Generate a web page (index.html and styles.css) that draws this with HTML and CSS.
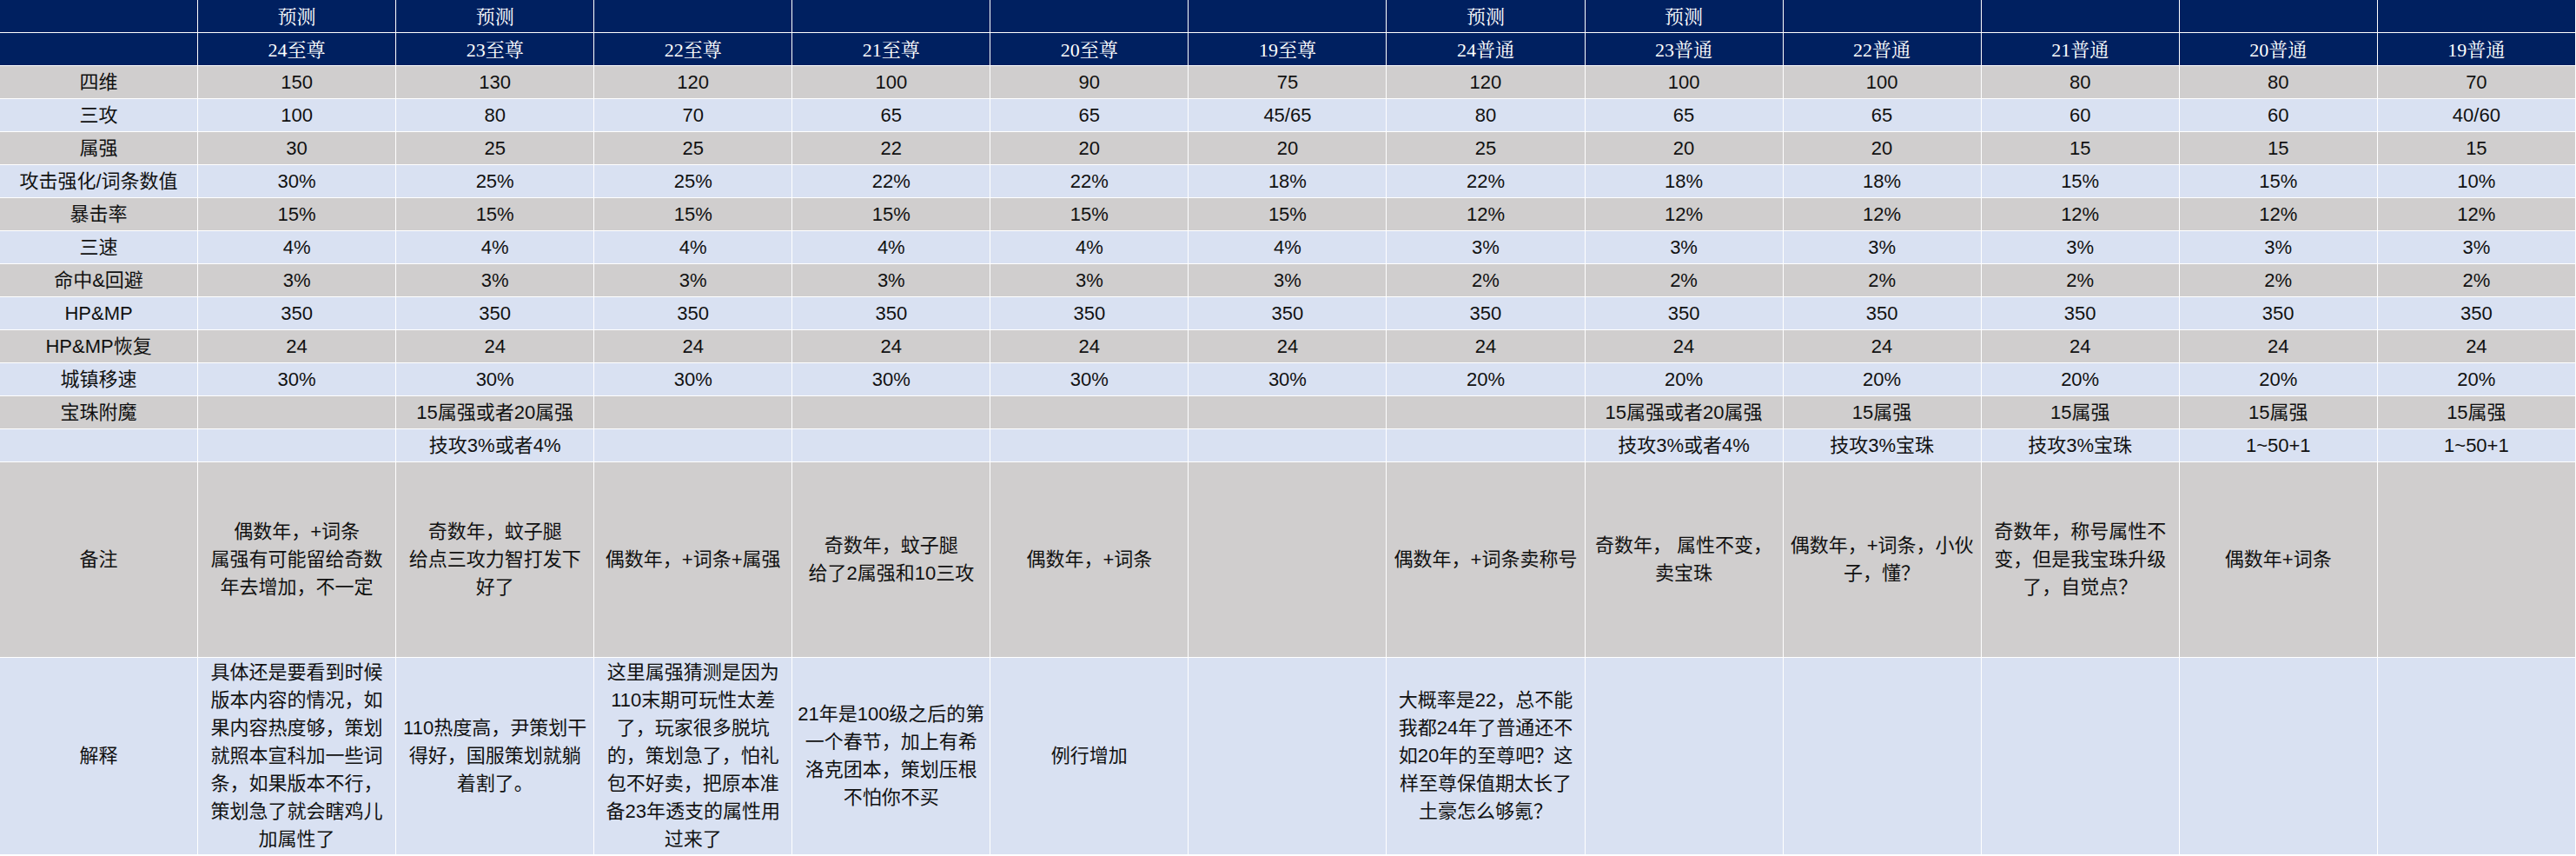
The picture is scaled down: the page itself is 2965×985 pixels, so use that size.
FILE: index.html
```html
<!DOCTYPE html>
<html lang="zh-CN">
<head>
<meta charset="utf-8">
<title>至尊/普通 属性对比</title>
<link rel="stylesheet" href="styles.css">
</head>
<body>
<table class="sheet">
  <tbody>
    <tr class="hdr">
      <td></td><td>预测</td><td>预测</td><td></td><td></td><td></td><td></td><td>预测</td><td>预测</td><td></td><td></td><td></td><td></td>
    </tr>
    <tr class="hdr">
      <td></td><td>24至尊</td><td>23至尊</td><td>22至尊</td><td>21至尊</td><td>20至尊</td><td>19至尊</td><td>24普通</td><td>23普通</td><td>22普通</td><td>21普通</td><td>20普通</td><td>19普通</td>
    </tr>
    <tr class="gray">
      <td>四维</td><td>150</td><td>130</td><td>120</td><td>100</td><td>90</td><td>75</td><td>120</td><td>100</td><td>100</td><td>80</td><td>80</td><td>70</td>
    </tr>
    <tr class="blue">
      <td>三攻</td><td>100</td><td>80</td><td>70</td><td>65</td><td>65</td><td>45/65</td><td>80</td><td>65</td><td>65</td><td>60</td><td>60</td><td>40/60</td>
    </tr>
    <tr class="gray">
      <td>属强</td><td>30</td><td>25</td><td>25</td><td>22</td><td>20</td><td>20</td><td>25</td><td>20</td><td>20</td><td>15</td><td>15</td><td>15</td>
    </tr>
    <tr class="blue">
      <td>攻击强化/词条数值</td><td>30%</td><td>25%</td><td>25%</td><td>22%</td><td>22%</td><td>18%</td><td>22%</td><td>18%</td><td>18%</td><td>15%</td><td>15%</td><td>10%</td>
    </tr>
    <tr class="gray">
      <td>暴击率</td><td>15%</td><td>15%</td><td>15%</td><td>15%</td><td>15%</td><td>15%</td><td>12%</td><td>12%</td><td>12%</td><td>12%</td><td>12%</td><td>12%</td>
    </tr>
    <tr class="blue">
      <td>三速</td><td>4%</td><td>4%</td><td>4%</td><td>4%</td><td>4%</td><td>4%</td><td>3%</td><td>3%</td><td>3%</td><td>3%</td><td>3%</td><td>3%</td>
    </tr>
    <tr class="gray">
      <td>命中&amp;回避</td><td>3%</td><td>3%</td><td>3%</td><td>3%</td><td>3%</td><td>3%</td><td>2%</td><td>2%</td><td>2%</td><td>2%</td><td>2%</td><td>2%</td>
    </tr>
    <tr class="blue">
      <td>HP&amp;MP</td><td>350</td><td>350</td><td>350</td><td>350</td><td>350</td><td>350</td><td>350</td><td>350</td><td>350</td><td>350</td><td>350</td><td>350</td>
    </tr>
    <tr class="gray">
      <td>HP&amp;MP恢复</td><td>24</td><td>24</td><td>24</td><td>24</td><td>24</td><td>24</td><td>24</td><td>24</td><td>24</td><td>24</td><td>24</td><td>24</td>
    </tr>
    <tr class="blue">
      <td>城镇移速</td><td>30%</td><td>30%</td><td>30%</td><td>30%</td><td>30%</td><td>30%</td><td>20%</td><td>20%</td><td>20%</td><td>20%</td><td>20%</td><td>20%</td>
    </tr>
    <tr class="gray">
      <td>宝珠附魔</td><td></td><td>15属强或者20属强</td><td></td><td></td><td></td><td></td><td></td><td>15属强或者20属强</td><td>15属强</td><td>15属强</td><td>15属强</td><td>15属强</td>
    </tr>
    <tr class="blue">
      <td></td><td></td><td>技攻3%或者4%</td><td></td><td></td><td></td><td></td><td></td><td>技攻3%或者4%</td><td>技攻3%宝珠</td><td>技攻3%宝珠</td><td>1~50+1</td><td>1~50+1</td>
    </tr>
    <tr class="gray tall note">
      <td>备注</td>
      <td>偶数年，+词条<br>属强有可能留给奇数年去增加，不一定</td>
      <td>奇数年，蚊子腿<br>给点三攻力智打发下好了</td>
      <td>偶数年，+词条+属强</td>
      <td>奇数年，蚊子腿<br>给了2属强和10三攻</td>
      <td>偶数年，+词条</td>
      <td></td>
      <td>偶数年，+词条卖称号</td>
      <td>奇数年， 属性不变，卖宝珠</td>
      <td>偶数年，+词条，小伙子，懂？</td>
      <td>奇数年，称号属性不变，但是我宝珠升级了，自觉点？</td>
      <td>偶数年+词条</td>
      <td></td>
    </tr>
    <tr class="blue tall explain">
      <td>解释</td>
      <td>具体还是要看到时候版本内容的情况，如果内容热度够，策划就照本宣科加一些词条，如果版本不行，策划急了就会瞎鸡儿加属性了</td>
      <td>110热度高，尹策划干得好，国服策划就躺着割了。</td>
      <td>这里属强猜测是因为110末期可玩性太差了，玩家很多脱坑的，策划急了，怕礼包不好卖，把原本准备23年透支的属性用过来了</td>
      <td>21年是100级之后的第一个春节，加上有希洛克团本，策划压根不怕你不买</td>
      <td>例行增加</td>
      <td></td>
      <td>大概率是22，总不能我都24年了普通还不如20年的至尊吧？这样至尊保值期太长了土豪怎么够氪？</td>
      <td></td>
      <td></td>
      <td></td>
      <td></td>
      <td></td>
    </tr>
  </tbody>
</table>
</body>
</html>
```

FILE: styles.css
```css
html, body {
  margin: 0;
  padding: 0;
  background: #ffffff;
}

.sheet {
  width: 2965px;
  table-layout: fixed;
  border-collapse: separate;
  border-spacing: 0;
  font-family: "Liberation Sans", "Noto Sans CJK SC", sans-serif;
  font-size: 22px;
  color: #111111;
  text-spacing-trim: space-all;
}

.sheet td {
  box-sizing: border-box;
  height: 38px;
  padding: 0 5px;
  border-right: 1px solid #ffffff;
  border-bottom: 1px solid #ffffff;
  text-align: center;
  vertical-align: middle;
  line-height: 32px;
  overflow: hidden;
}

.hdr td {
  background: #002060;
  color: #ffffff;
  font-family: "Liberation Serif", "Noto Serif CJK SC", "Noto Sans CJK SC", serif;
  font-size: 22px;
  padding-top: 3px;
}

.gray td {
  background: #d0cece;
}

.blue td {
  background: #d9e1f2;
}

.note td {
  height: 225px;
}

.explain td {
  height: 227px;
}
```
